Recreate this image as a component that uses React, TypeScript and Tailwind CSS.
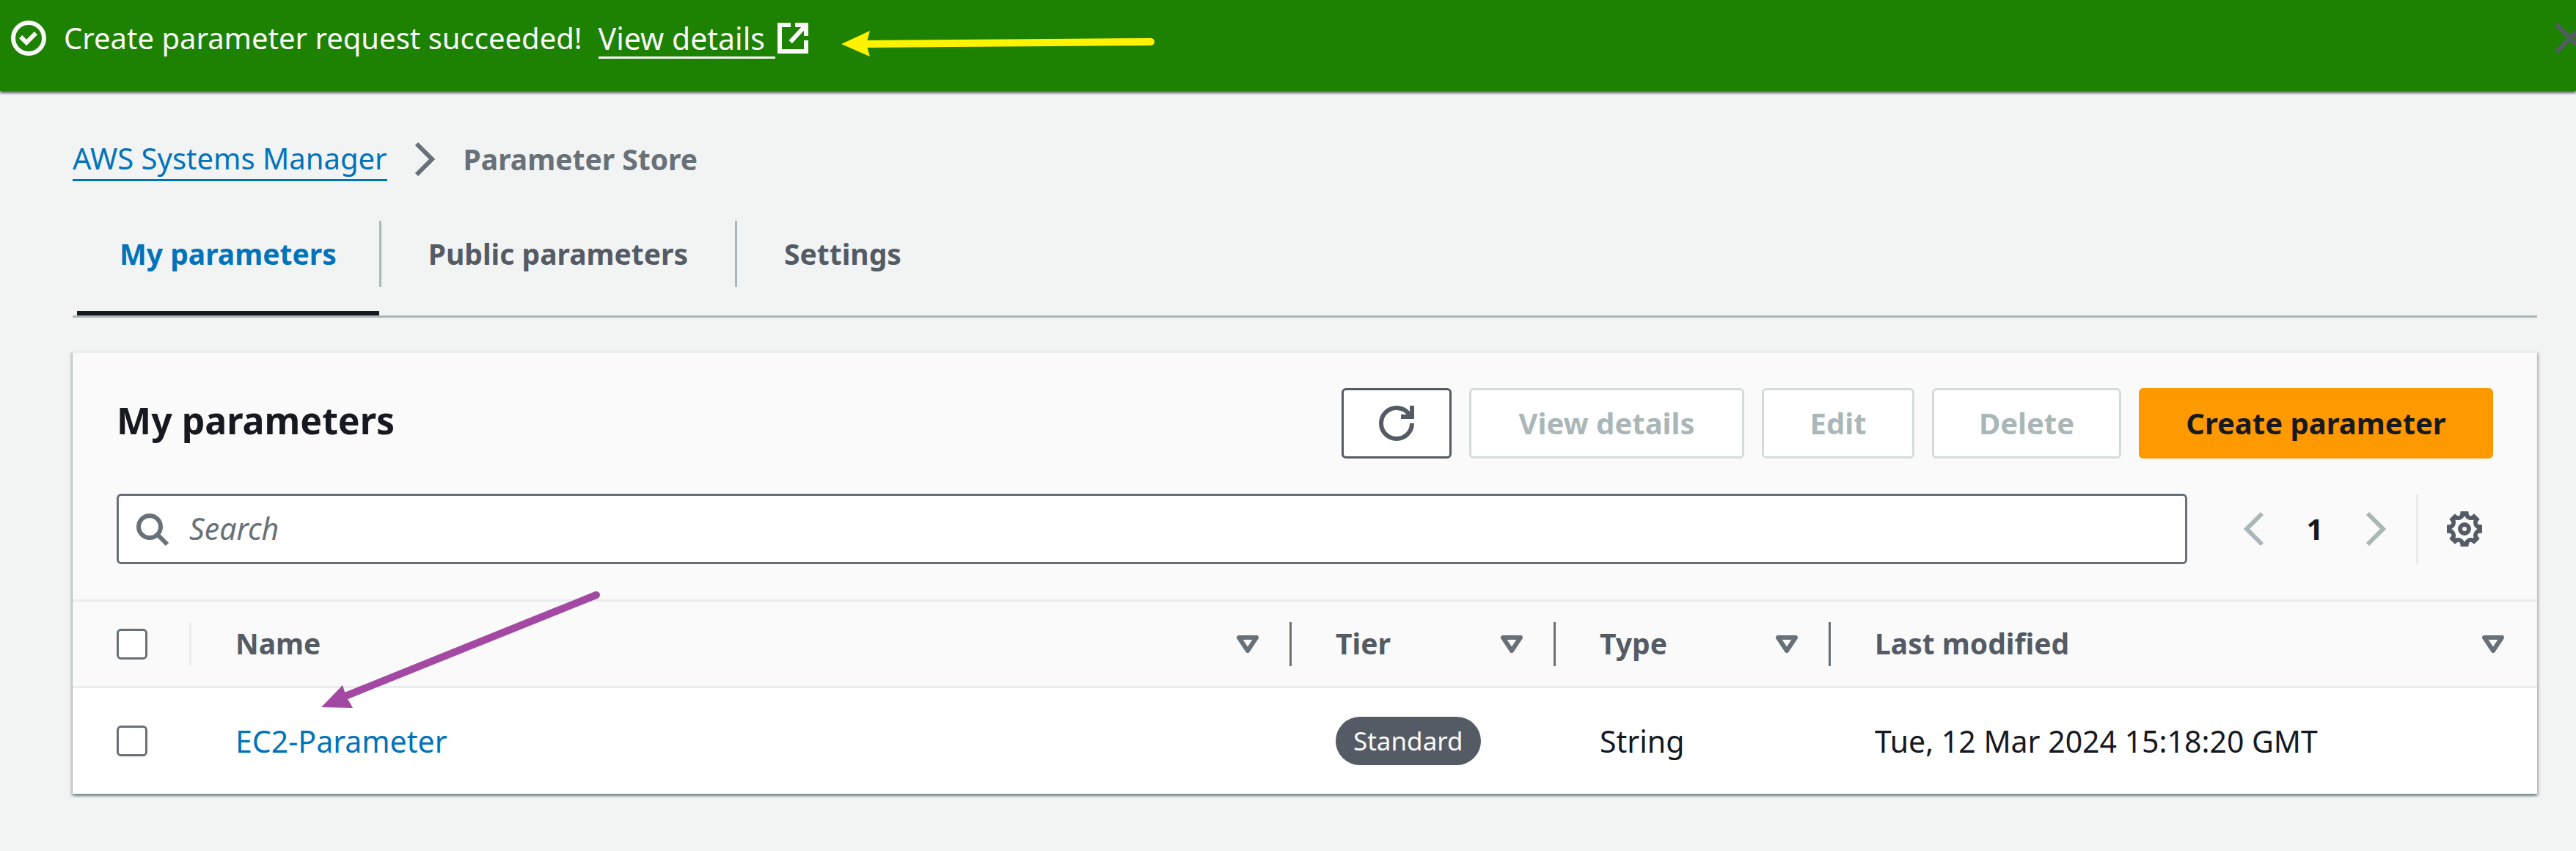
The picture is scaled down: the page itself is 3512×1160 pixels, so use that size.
import React from "react";

type IconProps = { className?: string; children: React.ReactNode };

function Icon({ className = "", children }: IconProps) {
  return (
    <svg
      viewBox="0 0 16 16"
      fill="none"
      stroke="currentColor"
      strokeWidth={2}
      aria-hidden="true"
      className={`size-12 shrink-0 ${className}`}
    >
      {children}
    </svg>
  );
}

function SortIcon() {
  return (
    <Icon className="text-[#687078]">
      <path d="M4 5h8l-4 6z" strokeLinejoin="round" />
    </Icon>
  );
}

// Rotates a point given relative to the gear's centre by a number of eighth turns.
function spin(x: number, y: number, step: number) {
  const a = (step * Math.PI) / 4;
  const px = 8 + x * Math.cos(a) - y * Math.sin(a);
  const py = 8 + x * Math.sin(a) + y * Math.cos(a);
  return `${px.toFixed(2)} ${py.toFixed(2)}`;
}

const steps = [0, 1, 2, 3, 4, 5, 6, 7];

const gearOutline =
  "M" + steps.map((s) => `${spin(-1.8, -8, s)}L${spin(1.8, -8, s)}Q${spin(1.8, -4.4, s)} ${spin(-1.8, -8, s + 1)}`).join("L") + "Z";

const gearHole =
  "M" + spin(0, -5.9, 0) + steps.map((s) => `Q${spin(1.4, -3.4, s)} ${spin(0, -5.9, s + 1)}`).join("") + "Z";

function GearIcon() {
  return (
    <Icon>
      <path d={gearOutline + gearHole} fill="currentColor" fillRule="evenodd" stroke="none" />
      <circle cx="8" cy="8" r="2" />
    </Icon>
  );
}

function Flashbar() {
  return (
    <div
      role="status"
      className="relative z-10 flex h-[124px] items-start bg-[#1d8102] pt-[19px] pl-[15px] text-[40px] leading-[66px] text-[#fafafa] shadow-[0_3px_3px_0_rgba(0,7,22,0.6)]"
    >
      <Icon className="mt-[9px]">
        <circle cx="8" cy="8" r="7" />
        <path d="M4.4 7.4L7 10l4.3-4.300" />
      </Icon>
      <p className="ml-6 whitespace-nowrap">Create parameter request succeeded!</p>
      <a href="#details" className="ml-[22px] flex items-start text-[41px] whitespace-nowrap">
        <span className="h-[61px] border-b-[3px] border-current pr-[14px]">View details</span>
        <Icon className="mt-[9px]">
          <path d="M7 2H2v12h12V9M9 2h5v5M14 2L6.900 9.700" />
        </Icon>
      </a>
      <svg viewBox="0 0 430 40" className="mt-5 ml-[42px] h-10 w-[430px] shrink-0" aria-hidden="true">
        <path d="M30 21L422 18" stroke="#fff200" strokeWidth="10" strokeLinecap="round" />
        <path d="M0 21L39 3L34 21L39 38Z" fill="#fff200" />
      </svg>
      <button type="button" aria-label="Dismiss" className="mt-[9px] -mr-4 ml-auto text-[#545b64]">
        <Icon>
          <path d="M1.700 1.700l12.600 12.600M14.300 1.700L1.700 14.300" />
        </Icon>
      </button>
    </div>
  );
}

function Breadcrumbs() {
  return (
    <nav aria-label="Breadcrumbs" className="flex h-[66px] items-center leading-[56px]">
      <a href="#systems-manager" className="border-b-[3px] border-current text-[40px] text-[#0073bb]">
        AWS Systems Manager
      </a>
      <Icon className="mx-7 text-[#687078]">
        <path d="M4 1l7 7-7 7" />
      </Icon>
      <span className="text-[39px] font-bold text-[#687078]">Parameter Store</span>
    </nav>
  );
}

function Tabs() {
  return (
    <div role="tablist" className="mt-6 flex h-[159px] border-b-[3px] border-[#aab7b8] pl-[6px] text-[39px] leading-[66px] font-bold text-[#545b64]">
      <button type="button" role="tab" aria-selected="true" className="flex border-b-[6px] border-[#16191f] px-[58px] pt-[39px] text-[#0073bb]">
        My parameters
      </button>
      <button type="button" role="tab" aria-selected="false" className="mt-[27px] h-[90px] border-x-[3px] border-[#aab7b8] px-[64px]">
        Public parameters
      </button>
      <button type="button" role="tab" aria-selected="false" className="mt-[27px] h-[90px] px-[64px]">
        Settings
      </button>
    </div>
  );
}

function PanelHeader() {
  return (
    <div className="flex items-center gap-6 text-[40px] font-bold">
      <h2 className="mr-auto mb-2 text-[50px] leading-[66px] text-[#16191f]">My parameters</h2>
      <button type="button" aria-label="Refresh" className="flex h-24 w-[150px] items-center justify-center rounded-md border-[3px] border-[#545b64] bg-white text-[#545b64]">
        <Icon>
          <path d="M15 8c0 3.900-3.100 7-7 7s-7-3.100-7-7 3.100-7 7-7c2.800 0 5.200 1.600 6.300 4M15 0v5h-5" />
        </Icon>
      </button>
      <button type="button" disabled className="h-24 w-[375px] rounded-md border-[3px] border-[#d5dbdb] bg-white text-[#aab7b8]">
        View details
      </button>
      <button type="button" disabled className="h-24 w-[208px] rounded-md border-[3px] border-[#d5dbdb] bg-white text-[#aab7b8]">
        Edit
      </button>
      <button type="button" disabled className="h-24 w-[258px] rounded-md border-[3px] border-[#d5dbdb] bg-white text-[#aab7b8]">
        Delete
      </button>
      <button type="button" className="h-24 w-[483px] rounded-md bg-[#ff9900] text-[#16191f]">
        Create parameter
      </button>
    </div>
  );
}

function Toolbar() {
  return (
    <div className="mt-12 flex h-24 items-center">
      <label className="flex h-24 flex-1 items-center rounded-md border-[3px] border-[#687078] bg-white pl-[21px]">
        <Icon className="text-[#687078]">
          <circle cx="7" cy="7" r="5" />
          <path d="M15 15l-4.500-4.500" />
        </Icon>
        <input
          type="search"
          aria-label="Search"
          placeholder="Search"
          className="ml-[27px] min-w-0 flex-1 text-[41px] outline-none placeholder:text-[#687078] placeholder:italic"
        />
      </label>
      <button type="button" aria-label="Previous page" disabled className="ml-[66px] text-[#aab7b8]">
        <Icon><path d="M12 1L5 8l7 7" /></Icon>
      </button>
      <button type="button" aria-current="page" className="w-[120px] text-center text-[40px] font-bold text-[#16191f]">
        1
      </button>
      <button type="button" aria-label="Next page" disabled className="text-[#aab7b8]">
        <Icon><path d="M4 1l7 7-7 7" /></Icon>
      </button>
      <div className="ml-[30px] h-24 border-l-[3px] border-[#eaeded] pr-[15px] pl-[39px]">
        <button type="button" aria-label="Preferences" className="flex h-full items-center text-[#545b64]">
          <GearIcon />
        </button>
      </div>
    </div>
  );
}

function Checkbox({ label }: { label: string }) {
  return (
    <input
      type="checkbox"
      aria-label={label}
      className="block size-[42px] appearance-none rounded-md border-[3px] border-[#687078] bg-white"
    />
  );
}

function HeaderCell({ label, last = false }: { label: string; last?: boolean }) {
  return (
    <th scope="col" className="p-0">
      <div className={`flex h-[60px] items-center justify-between border-r-[3px] pr-[33px] pl-[60px] ${last ? "border-transparent" : "border-[#687078]"}`}>
        {label}
        <button type="button" aria-label={`Sort by ${label}`}>
          <SortIcon />
        </button>
      </div>
    </th>
  );
}

function ParameterTable() {
  return (
    <table className="w-full table-fixed border-collapse text-left">
      <colgroup>
        <col className="w-[162px]" />
        <col />
        <col className="w-[360px]" />
        <col className="w-[375px]" />
        <col className="w-[963px]" />
      </colgroup>
      <thead>
        <tr className="h-[118px] border-y-[3px] border-[#eaeded] bg-[#fafafa] text-[39px] font-bold text-[#545b64]">
          <th scope="col" className="p-0">
            <div className="flex h-[60px] items-center border-r-[3px] border-[#eaeded] pl-[60px]">
              <Checkbox label="Select all parameters" />
            </div>
          </th>
          <HeaderCell label="Name" />
          <HeaderCell label="Tier" />
          <HeaderCell label="Type" />
          <HeaderCell label="Last modified" last />
        </tr>
      </thead>
      <tbody>
        <tr className="h-[145px] bg-white text-[41px] leading-[66px] text-[#16191f]">
          <td className="p-0 pl-[60px]"><Checkbox label="Select EC2-Parameter" /></td>
          <td className="p-0 pl-[60px]"><a href="#ec2-parameter" className="text-[#0073bb]">EC2-Parameter</a></td>
          <td className="p-0 pl-[60px]">
            <span className="block w-fit rounded-full bg-[#545b64] px-6 text-[35px] text-[#fafafa]">Standard</span>
          </td>
          <td className="p-0 pl-[60px]">String</td>
          <td className="p-0 pl-[60px]">Tue, 12 Mar 2024 15:18:20 GMT</td>
        </tr>
      </tbody>
    </table>
  );
}

export default function App() {
  return (
    <div className="min-h-screen overflow-x-hidden bg-[#f2f3f3] font-['Noto_Sans','Open_Sans',sans-serif]">
      <Flashbar />
      <main className="pt-[60px] pr-[53px] pb-10 pl-[99px]">
        <Breadcrumbs />
        <Tabs />
        <section className="relative mt-[45px] border-t-[3px] border-[#eaeded] bg-[#fafafa] shadow-[0_3px_3px_0_rgba(0,28,36,0.3),3px_3px_3px_0_rgba(0,28,36,0.15),-3px_3px_3px_0_rgba(0,28,36,0.15)]">
          <div className="px-[60px] py-12">
            <PanelHeader />
            <Toolbar />
          </div>
          <ParameterTable />
          <svg viewBox="0 0 400 170" className="pointer-events-none absolute top-[321px] left-[331px] h-[170px] w-[400px]" aria-hidden="true">
            <path d="M38 148L383 9" stroke="#a349a4" strokeWidth="10" strokeLinecap="round" />
            <path d="M8 162L37 132L42 147L51 163Z" fill="#a349a4" />
          </svg>
        </section>
      </main>
    </div>
  );
}
